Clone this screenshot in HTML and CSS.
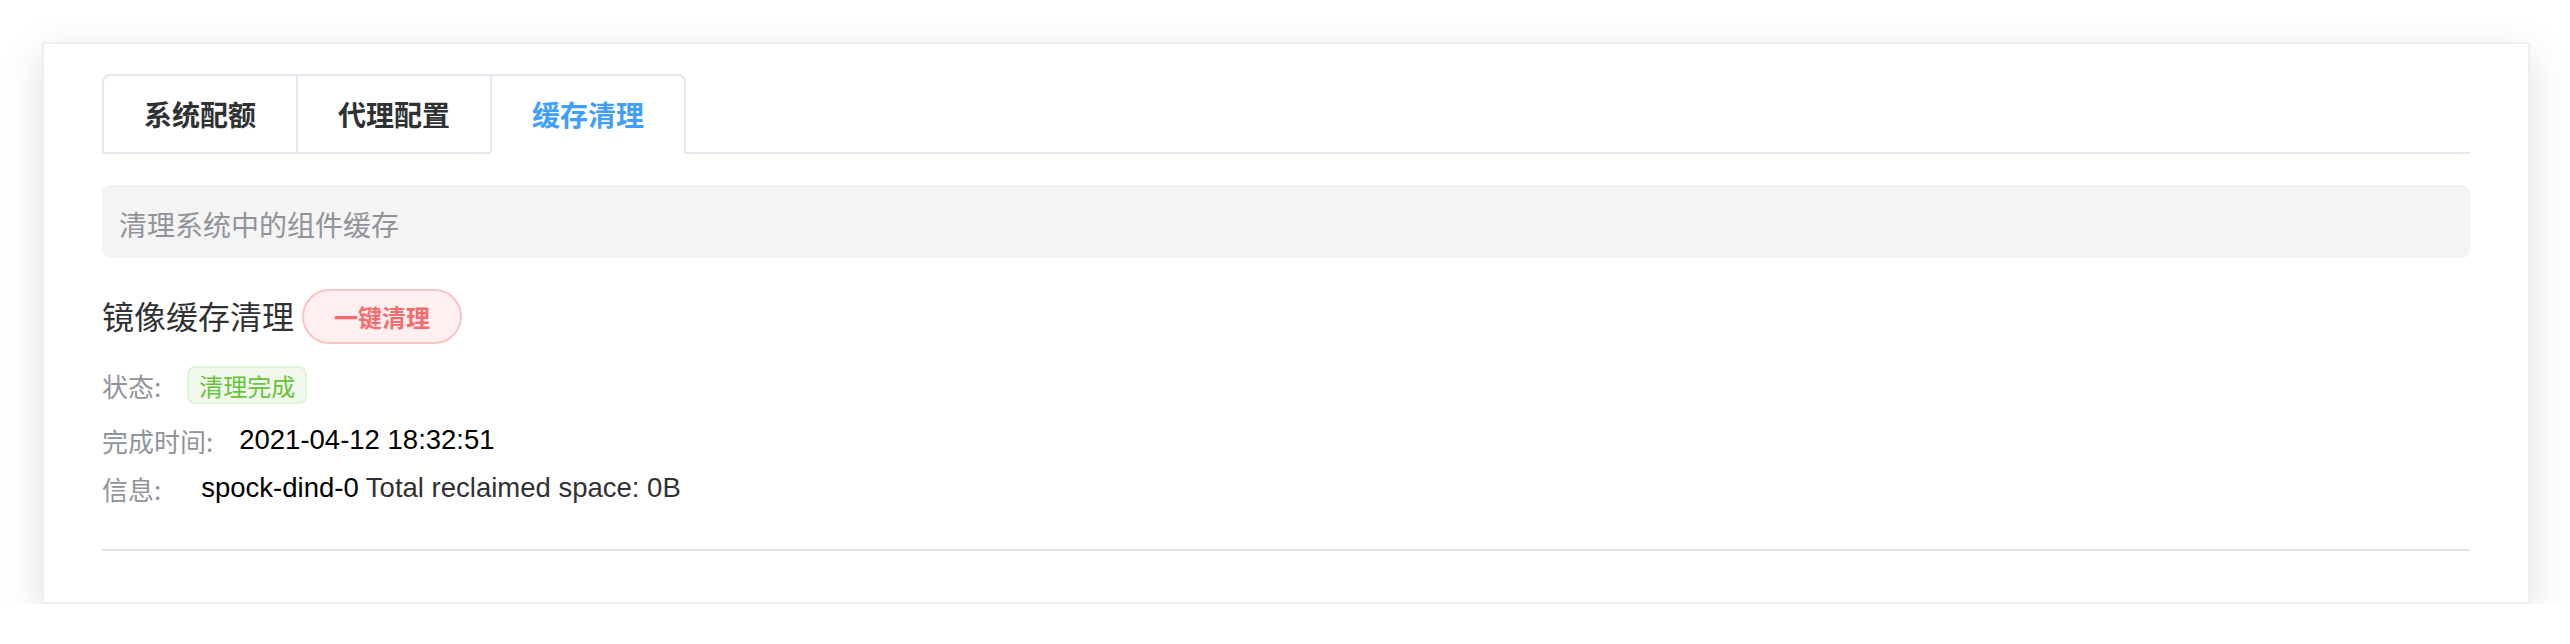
FILE: index.html
```html
<!DOCTYPE html>
<html lang="zh-CN">
<head>
<meta charset="utf-8">
<title>缓存清理</title>
<link rel="stylesheet" href="styles.css">
</head>
<body>
<div class="page">
  <div class="card">
    <div class="tabs-header">
      <div class="tabs-nav">
        <div class="tab">系统配额</div>
        <div class="tab">代理配置</div>
        <div class="tab active">缓存清理</div>
      </div>
    </div>
    <div class="alert">清理系统中的组件缓存</div>
    <div class="section-title">
      <span class="title-text">镜像缓存清理</span>
      <button class="btn-danger">一键清理</button>
    </div>
    <div class="row row-status">
      <span class="label">状态:</span>
      <span class="tag-success">清理完成</span>
    </div>
    <div class="row row-time">
      <span class="label">完成时间:</span>
      <span class="value">2021-04-12 18:32:51</span>
    </div>
    <div class="row row-info">
      <span class="label">信息:</span>
      <span class="value value-info"><span class="pod">spock-dind-0</span> <span class="msg">Total reclaimed space: 0B</span></span>
    </div>
    <div class="divider"></div>
  </div>
</div>
</body>
</html>
```

FILE: styles.css
```css
html, body {
  margin: 0;
  padding: 0;
  background: #ffffff;
}

body {
  font-family: "Liberation Sans", "Noto Sans CJK SC", sans-serif;
  color: #303133;
}

.page {
  padding: 42px 40px 0 42px;
}

.card {
  background: #ffffff;
  border: 2px solid #ebeef5;
  box-shadow: 0 12px 40px rgba(0, 0, 0, 0.13);
  padding: 30px 58px 51px 58px;
}

/* tabs */
.tabs-header {
  display: flex;
  border-bottom: 2px solid #e4e7ed;
}

.tabs-nav {
  display: flex;
  border: 2px solid #e4e7ed;
  border-bottom: none;
  border-radius: 8px 8px 0 0;
  margin-bottom: -2px;
}

.tab {
  height: 76px;
  line-height: 76px;
  padding: 0 40px;
  font-family: "Noto Sans CJK SC", sans-serif;
  font-size: 28px;
  font-weight: 600;
  color: #303133;
  border-left: 2px solid #e4e7ed;
  border-bottom: 2px solid transparent;
}

.tab:first-child {
  border-left: none;
}

.tab.active {
  color: #409eff;
  border-bottom-color: #ffffff;
}

/* alert */
.alert {
  margin-top: 31px;
  height: 73px;
  box-sizing: border-box;
  padding: 4px 17px 0 17px;
  display: flex;
  align-items: center;
  background: #f4f4f5;
  border-radius: 8px;
  font-family: "Noto Sans CJK SC", sans-serif;
  font-size: 28px;
  color: #909399;
}

/* section title */
.section-title {
  margin-top: 31px;
  display: flex;
  align-items: center;
  height: 55px;
}

.title-text {
  font-family: "Noto Sans CJK SC", sans-serif;
  font-size: 32px;
  color: #303133;
  margin-right: 8px;
  margin-top: -4px;
}

.btn-danger {
  height: 55px;
  box-sizing: border-box;
  padding: 0 30px;
  border: 2px solid #fbc4c4;
  background: #fef0f0;
  color: #f56c6c;
  border-radius: 28px;
  font-family: "Noto Sans CJK SC", sans-serif;
  font-size: 24px;
  font-weight: 600;
  line-height: 1;
  cursor: pointer;
}

/* rows */
.row {
  display: flex;
  align-items: center;
  height: 40px;
}

.label {
  font-family: "Noto Sans CJK SC", sans-serif;
  font-size: 26px;
  color: #909399;
  margin-right: 26px;
}

.row-status {
  margin-top: 22px;
  height: 38px;
}

.row-time {
  margin-top: 16px;
}

.row-info {
  margin-top: 8px;
}

.tag-success {
  height: 38px;
  box-sizing: border-box;
  padding: 0 10px;
  display: inline-flex;
  align-items: center;
  border: 2px solid #e1f3d8;
  background: #f0f9eb;
  color: #67c23a;
  border-radius: 8px;
  font-family: "Noto Sans CJK SC", sans-serif;
  font-size: 24px;
}

.value {
  font-family: "Liberation Sans", sans-serif;
  font-size: 27.5px;
  color: #000000;
}

.value-info {
  margin-left: 14px;
}

.pod {
  color: #000000;
}

.msg {
  color: #303133;
}

.divider {
  margin-top: 41px;
  height: 2px;
  background: #dcdfe6;
}
```
